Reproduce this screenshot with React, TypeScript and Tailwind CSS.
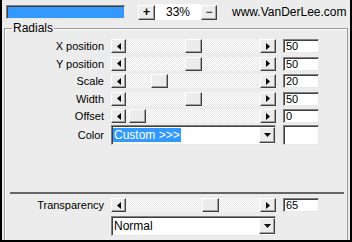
import React from "react";

const raised =
  "bg-[#ececec] border border-t-white border-l-white border-r-[#404040] border-b-[#404040] shadow-[inset_-1px_-1px_0_#a0a0a0]";
const sunken =
  "bg-white border border-t-[#808080] border-l-[#808080] border-r-[#e8e8e8] border-b-[#e8e8e8] shadow-[inset_1px_1px_0_#404040]";

function Arrow({ dir }: { dir: "left" | "right" | "down" }) {
  if (dir === "down")
    return (
      <svg width="7" height="4" viewBox="0 0 7 4">
        <path d="M0 0h7L3.5 4z" fill="#000" />
      </svg>
    );
  return (
    <svg width="4" height="7" viewBox="0 0 4 7">
      <path d={dir === "left" ? "M4 0v7L0 3.5z" : "M0 0v7l4-3.5z"} fill="#000" />
    </svg>
  );
}

function SliderRow({ label, value }: { label: string; value: number }) {
  return (
    <div className="flex items-center h-[14px]">
      <div className="w-[99px] text-right leading-[14px]">{label}</div>
      <div className="ml-[7px] flex w-[165px] h-[14px]">
        <div className={`${raised} w-[15px] h-full flex items-center justify-center`}>
          <Arrow dir="left" />
        </div>
        <div className="flex-1 h-full flex items-center bg-[repeating-conic-gradient(#ffffff_0_25%,#e6e6e6_0_50%)] bg-[length:2px_2px]">
          <div className={`${raised} w-[17px] h-[14px]`} style={{ marginLeft: Math.round(3 + value * 1.12) }} />
        </div>
        <div className={`${raised} w-[16px] h-full flex items-center justify-center`}>
          <Arrow dir="right" />
        </div>
      </div>
      <div className={`${sunken} ml-[7px] w-[36px] h-[14px] leading-[12px] pl-[2px]`}>{value}</div>
    </div>
  );
}

function Dropdown({ children }: { children: React.ReactNode }) {
  return (
    <div className={`${sunken} w-[165px] h-[20px] flex items-center`}>
      <div className="flex-1 flex items-center pl-[1px] text-[12px]">{children}</div>
      <div className={`${raised} w-[16px] h-[16px] flex items-center justify-center`}>
        <Arrow dir="down" />
      </div>
    </div>
  );
}

export default function App() {
  return (
    <div className="w-[352px] h-[242px] bg-[#ececec] border-x-2 border-b-2 border-black flex flex-col overflow-hidden text-[11px] text-black font-['Liberation_Sans',Arial,sans-serif]">
      {/* Top bar */}
      <div className="flex items-center h-[16px] mt-[4px] pl-[4px]">
        <div className={`${sunken} w-[119px] h-[14px] !bg-[#3399ff]`} />
        <div className={`${raised} ml-[13px] w-[17px] h-[15px] flex items-center justify-center font-bold text-[12px] leading-none`}>
          +
        </div>
        <div className="w-[46px] h-[16px] bg-white flex items-center justify-center text-[12px]">33%</div>
        <div className={`${raised} w-[16px] h-[15px] flex items-center justify-center text-[12px] leading-none`}>
          −
        </div>
        <div className="ml-[15px] text-[12px]">www.VanDerLee.com</div>
      </div>

      {/* Radials group */}
      <fieldset className="mt-[1px] ml-[2px] mr-[2px] flex-1 border border-b-0 border-[#9a9a9a] shadow-[inset_1px_1px_0_#ffffff]">
        <legend className="ml-[7px] px-[1px] leading-[14px] text-[12px]">Radials</legend>
        <div className="flex flex-col">
          <div className="mt-[4px] flex flex-col gap-[3.5px]">
            <SliderRow label="X position" value={50} />
            <SliderRow label="Y position" value={50} />
            <SliderRow label="Scale" value={20} />
            <SliderRow label="Width" value={50} />
            <SliderRow label="Offset" value={0} />
          </div>

          <div className="mt-[2px] flex items-center h-[20px]">
            <div className="w-[99px] text-right">Color</div>
            <div className="ml-[7px]">
              <Dropdown>
                <span className="bg-[#3399ff] text-white px-[1px] leading-[14px]">Custom &gt;&gt;&gt;</span>
              </Dropdown>
            </div>
            <div className={`${sunken} ml-[7px] w-[36px] h-[20px]`} />
          </div>

          <div className="mt-[47px] ml-[5px] mr-[3px] h-[2px] bg-[#666666]" />

          <div className="mt-[4px]">
            <SliderRow label="Transparency" value={65} />
          </div>
          <div className="mt-[4px] ml-[106px]">
            <Dropdown>
              <span className="px-[1px]">Normal</span>
            </Dropdown>
          </div>
        </div>
      </fieldset>
    </div>
  );
}
